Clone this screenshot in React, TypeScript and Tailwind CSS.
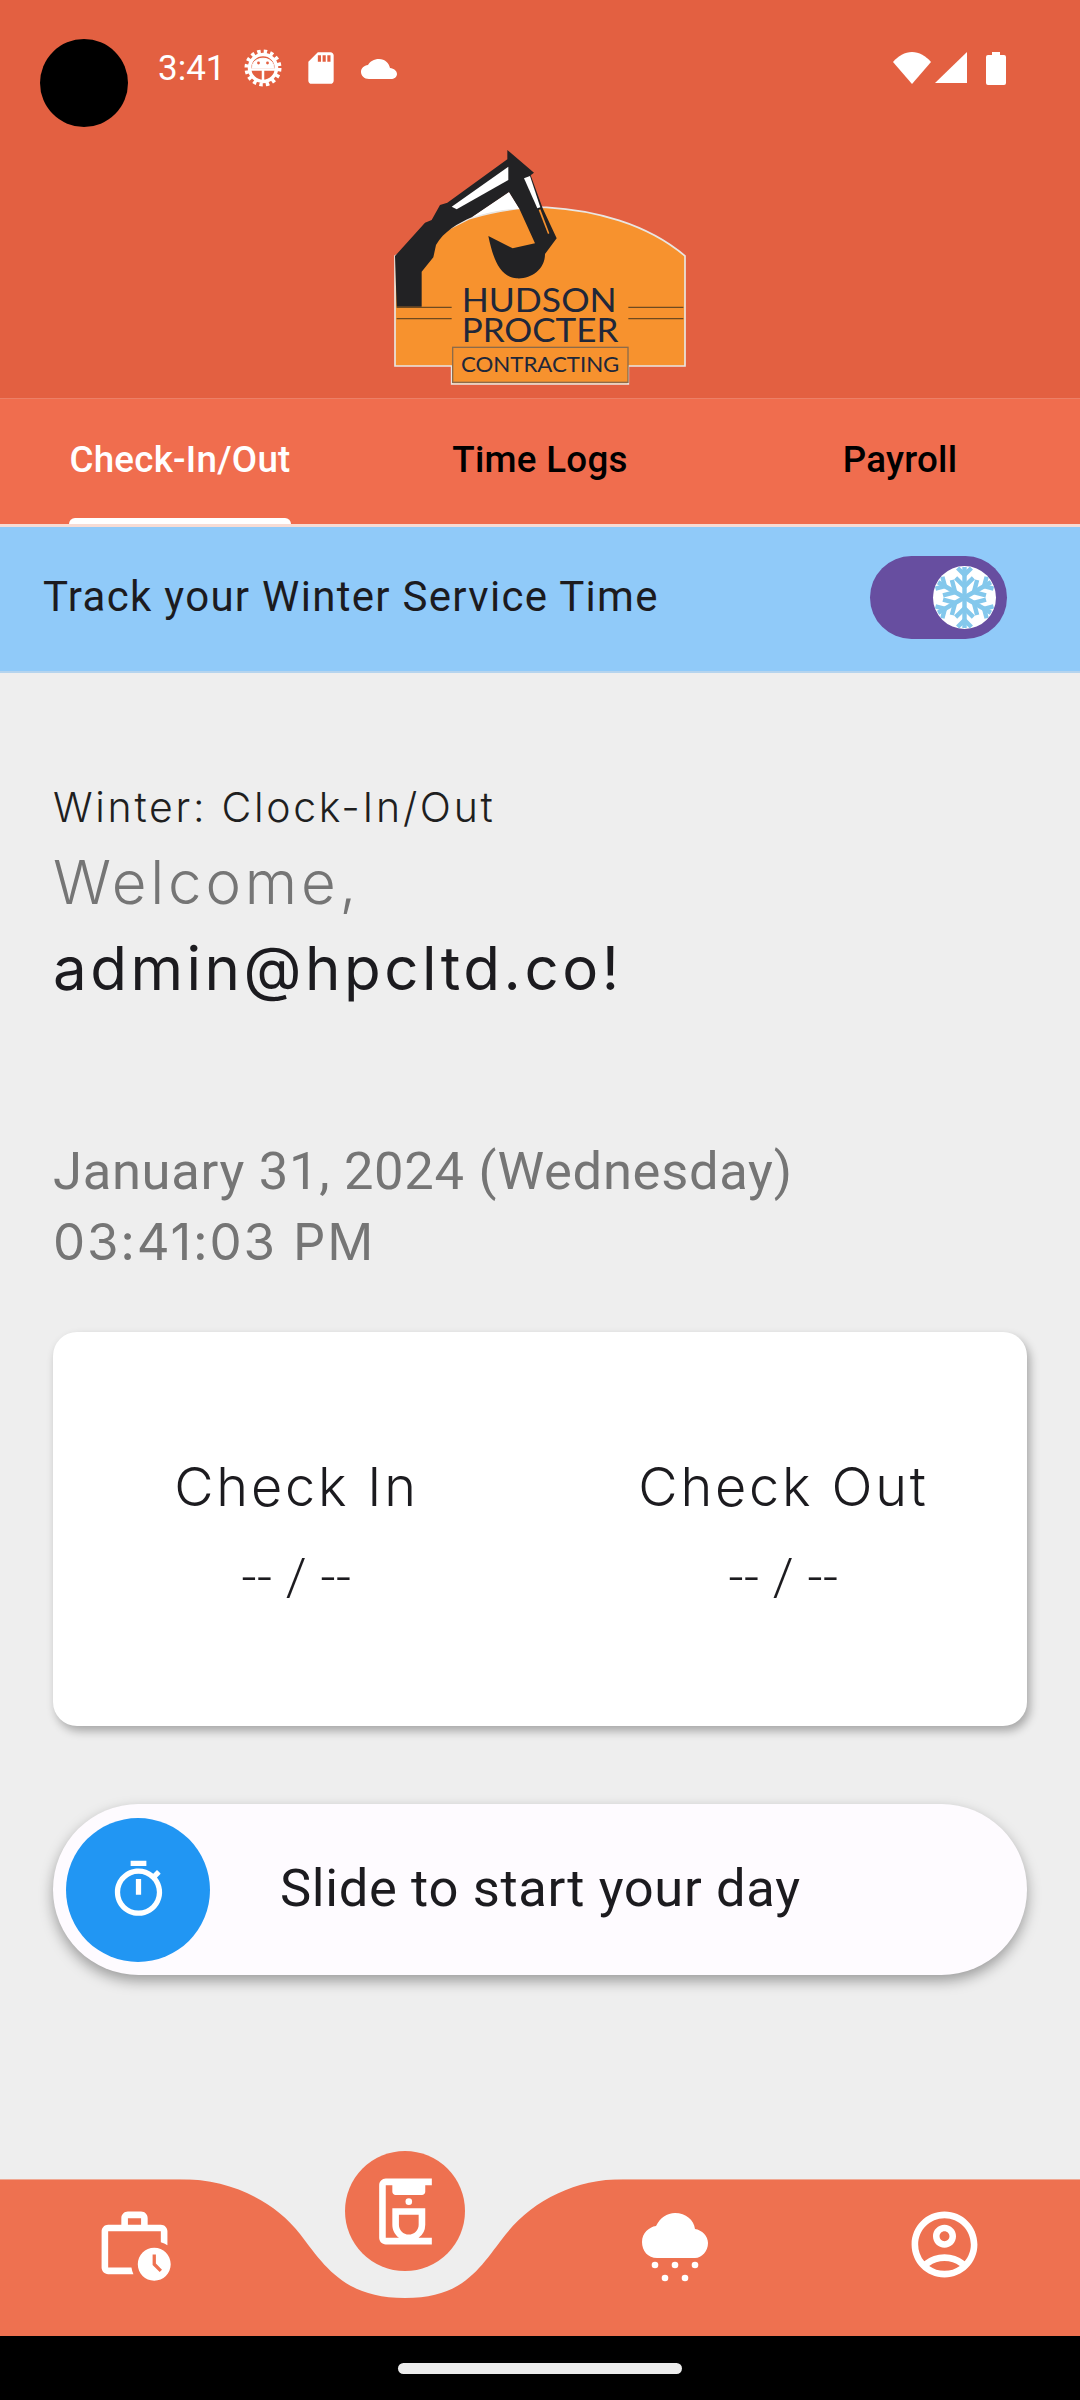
import React from "react";
import { MdOutlineWorkHistory, MdOutlineCoffeeMaker, MdOutlineAccountCircle, MdOutlineTimer, MdSdCard } from "react-icons/md";

const roboto = { fontFamily: "Roboto, sans-serif" };
const lato = "Lato, sans-serif";

function Logo() {
  return (
    <svg width="360" height="268" viewBox="0 0 1080 804" className="block">
      <path d="M335 262 L447 186 L478 236 L550 232 L540 262 Z" fill="#fff" />
      <path d="M105 378 L330 265 C420 240 500 230 560 232 C700 240 860 280 975 378 L975 708 L805 708 L805 762 L275 762 L275 708 L105 708 Z" fill="#F7922E" stroke="#E9E6E3" strokeWidth="5" />
      <path d="M335 262 L447 186 L478 236 C420 238 375 248 335 262 Z" fill="#fff" />
      <path d="M105 378 L195 278 L215 270 L240 225 L262 218 L442 88 L442 60 L522 128 L512 136 L548 235 L590 325 L555 372 C555 420 510 448 470 445 C420 440 400 390 385 318 L458 355 L525 340 L478 236 L447 186 L335 262 C295 280 250 305 228 345 L220 382 L185 425 L185 530 L110 530 Z" fill="#222224" />
      <path d="M275 230 L445 110 L445 150 L290 238 Z" fill="#fff" />
      <path d="M492 145 L510 138 L541 232 L532 235 Z" fill="#fff" />
      <path d="M536 240 L541 238 L568 310 L564 312 Z" fill="#F7922E" />
      <path d="M110 532 H275 M110 566 H275 M805 532 H970 M805 566 H970" stroke="#6E4A20" strokeWidth="4" />
      <text x="305" y="545" fontFamily={lato} fontSize="100" fill="#20273A" textLength="465" lengthAdjust="spacingAndGlyphs">HUDSON</text>
      <text x="305" y="637" fontFamily={lato} fontSize="100" fill="#20273A" textLength="470" lengthAdjust="spacingAndGlyphs">PROCTER</text>
      <rect x="278" y="652" width="526" height="105" fill="#F7922E" stroke="#8C6B4A" strokeWidth="4" />
      <text x="303" y="727" fontFamily={lato} fontSize="64" fill="#20273A" textLength="475" lengthAdjust="spacingAndGlyphs">CONTRACTING</text>
    </svg>
  );
}

function Snowflake() {
  const arm = (
    <g stroke="#84C8EC" strokeWidth="4.5" fill="none">
      <path d="M32 32 V1" />
      <path d="M25 2 L32 9 L39 2" />
      <path d="M23 12 L32 21 L41 12" />
    </g>
  );
  return (
    <svg width="63" height="63" viewBox="0 0 64 64" className="rounded-full bg-white">
      {[0, 60, 120, 180, 240, 300].map((a) => (
        <g key={a} transform={`rotate(${a} 32 32)`}>{arm}</g>
      ))}
    </svg>
  );
}

function AdbGear() {
  return (
    <svg width="40" height="40" viewBox="0 0 40 40" fill="none" stroke="#fff">
      <circle cx="20" cy="20" r="13.5" strokeWidth="3.5" />
      <circle cx="20" cy="20" r="16.5" strokeWidth="4" strokeDasharray="3.4 3.1" />
      <path d="M7 21.5 H33 M20 21.5 V33" strokeWidth="2.5" />
      <path d="M9 20 C9 7 31 7 31 20 Z" fill="#fff" strokeWidth="1" />
      <circle cx="15.5" cy="15" r="1.4" fill="#E36041" stroke="none" />
      <circle cx="24.5" cy="15" r="1.4" fill="#E36041" stroke="none" />
    </svg>
  );
}

function StatusBar() {
  return (
    <div className="flex items-center h-[130px] pl-[40px] pr-[74px] shrink-0">
      <div className="w-[88px] h-[88px] rounded-full bg-black mt-[36px] mr-[30px] shrink-0" />
      <div className="flex items-center mt-[6px] text-white text-[35px] font-normal leading-none" style={roboto}>
        <span>3:41</span>
        <div className="ml-[17px]"><AdbGear /></div>
        <MdSdCard size={38} className="ml-[19px]" />
        <svg width="36" height="20" viewBox="0 0 36 20" fill="#fff" className="ml-[21px] mt-[1px]">
          <path d="M8 20 C3 20 0 16.5 0 13 C0 9 3 6.5 7 6 C9 2.5 13 0 18 0 C24 0 28 4 29 9 C33 9.5 36 12 36 15 C36 18 33 20 30 20 Z" />
        </svg>
      </div>
      <div className="ml-auto flex items-center mt-[6px]">
        <svg width="38" height="32" viewBox="0 0 38 32" fill="#fff"><path d="M19 32 L0 10 C5 4 12 0 19 0 C26 0 33 4 38 10 Z" /></svg>
        <svg width="32" height="32" viewBox="0 0 32 32" fill="#fff" className="ml-[4px]"><path d="M32 0 V31 H0 Z" /></svg>
        <svg width="20" height="33" viewBox="0 0 20 33" fill="#fff" className="ml-[19px]"><path d="M6 0 H14 V3 H18 Q20 3 20 5 V31 Q20 33 18 33 H2 Q0 33 0 31 V5 Q0 3 2 3 H6 Z" /></svg>
      </div>
    </div>
  );
}

function Tabs() {
  const tabs = ["Check-In/Out", "Time Logs", "Payroll"];
  return (
    <div className="flex h-[129px] bg-[#F06D4E] border-t border-[#EC8067] border-b-[3px] border-b-[#F7DCD5]">
      {tabs.map((t, i) => (
        <div key={t} className="relative flex-1 flex justify-center pt-[39px]">
          <span className={`text-[36.75px] leading-[43px] font-medium tracking-[0.25px] ${i === 0 ? "text-white" : "text-black"}`} style={roboto}>{t}</span>
          {i === 0 && <div className="absolute bottom-0 left-[69px] w-[222px] h-[6px] rounded-t-[6px] bg-white" />}
        </div>
      ))}
    </div>
  );
}

function SnowCloud() {
  return (
    <svg width="66" height="72" viewBox="0 0 66 72" fill="#fff">
      <path d="M53 46 H15 C6 46 0 39 0 30 C0 21 7 15 14 14 C18 6 25 1 33 1 C44 1 52 8 53 17 C60 18 66 24 66 31 C66 39 60 46 53 46 Z" />
      <circle cx="13" cy="53" r="3.3" /><circle cx="33" cy="53" r="3.3" /><circle cx="53" cy="53" r="3.3" />
      <circle cx="23" cy="66" r="3.3" /><circle cx="43" cy="66" r="3.3" />
    </svg>
  );
}

function BottomNav() {
  return (
    <div className="relative h-[157px] bg-[#EE7150] border-t border-[#EFA893]">
      <svg className="absolute left-0 top-[-1px]" width="1080" height="122" viewBox="0 0 1080 122">
        <path d="M180 0 C230 0 275 22 300 55 C325 88 345 119 405 119 C465 119 480 88 506 55 C532 22 575 0 623 0 Z" fill="#EEEEEE" />
      </svg>
      <div className="absolute left-[345px] top-[-29px] w-[120px] h-[120px] rounded-full bg-[#EE7150] flex items-center justify-center text-white">
        <MdOutlineCoffeeMaker size={79} />
      </div>
      <div className="absolute left-[95px] top-[25px] text-white"><MdOutlineWorkHistory size={79} /></div>
      <div className="absolute left-[642px] top-[32px]"><SnowCloud /></div>
      <div className="absolute left-[905px] top-[25px] text-white"><MdOutlineAccountCircle size={79} /></div>
    </div>
  );
}

export default function App() {
  return (
    <div className="w-[1080px] h-[2400px] flex flex-col bg-[#EEEEEE] overflow-hidden">
      <div className="h-[398px] bg-[#E36041] flex flex-col overflow-hidden">
        <StatusBar />
        <div className="flex justify-center"><Logo /></div>
      </div>
      <Tabs />
      <div className="h-[146px] bg-[#90CAF9] border-b-[2px] border-b-[#B5D4EE] flex items-center pl-[43px] pr-[73px]">
        <span className="text-[42px] tracking-[1.3px] text-[#1C1B1F] -mt-[5px]" style={roboto}>Track your Winter Service Time</span>
        <div className="ml-auto w-[137px] h-[83px] rounded-full bg-[#674EA0] flex items-center justify-end pr-[11px] -mt-[3px]">
          <Snowflake />
        </div>
      </div>
      <div className="flex-1 flex flex-col px-[53px]" style={{ fontFamily: "Inter, sans-serif" }}>
        <div className="mt-[111px] text-[41px] leading-[46px] text-[#1f1f1f] font-light tracking-[2.7px] whitespace-nowrap">Winter: Clock-In/Out</div>
        <div className="mt-[17px] text-[60px] leading-[70px] text-[#757575] font-light tracking-[3.8px]">Welcome,</div>
        <div className="mt-[16px] text-[60px] leading-[70px] text-[#1C1B1F] font-normal tracking-[3.5px]">admin@hpcltd.co!</div>
        <div className="mt-[138px] text-[52.5px] leading-[60px] text-[#757575] tracking-[0.7px]" style={roboto}>January 31, 2024 (Wednesday)</div>
        <div className="mt-[11px] text-[51px] leading-[60px] text-[#757575] tracking-[1.8px]">03:41:03 PM</div>
        <div className="mt-[60px] h-[394px] rounded-[24px] bg-white shadow-[3px_5px_10px_rgba(0,0,0,0.3)] flex items-center">
          {["Check In", "Check Out"].map((t) => (
            <div key={t} className="flex-1 flex flex-col items-center pt-[6px]">
              <div className="text-[54px] leading-[62px] text-[#1C1B1F] font-light tracking-[2.8px]">{t}</div>
              <div className="mt-[28px] text-[52.5px] leading-[62px] text-[#1C1B1F] font-light tracking-[0.5px]" style={roboto}>-- / --</div>
            </div>
          ))}
        </div>
        <div className="mt-[78px] h-[171px] rounded-full bg-[#FEFBFF] shadow-[0_6px_14px_rgba(0,0,0,0.35)] flex items-center pl-[13px]">
          <div className="w-[144px] h-[144px] rounded-full bg-[#2196F3] flex items-center justify-center text-white"><MdOutlineTimer size={63} /></div>
          <span className="ml-[70px] text-[52.5px] text-[#1C1B1F] tracking-[0.65px] -mt-[3px]" style={roboto}>Slide to start your day</span>
        </div>
      </div>
      <BottomNav />
      <div className="h-[64px] bg-black flex justify-center pt-[27px]">
        <div className="w-[284px] h-[11px] rounded-full bg-[#ECECEC]" />
      </div>
    </div>
  );
}
